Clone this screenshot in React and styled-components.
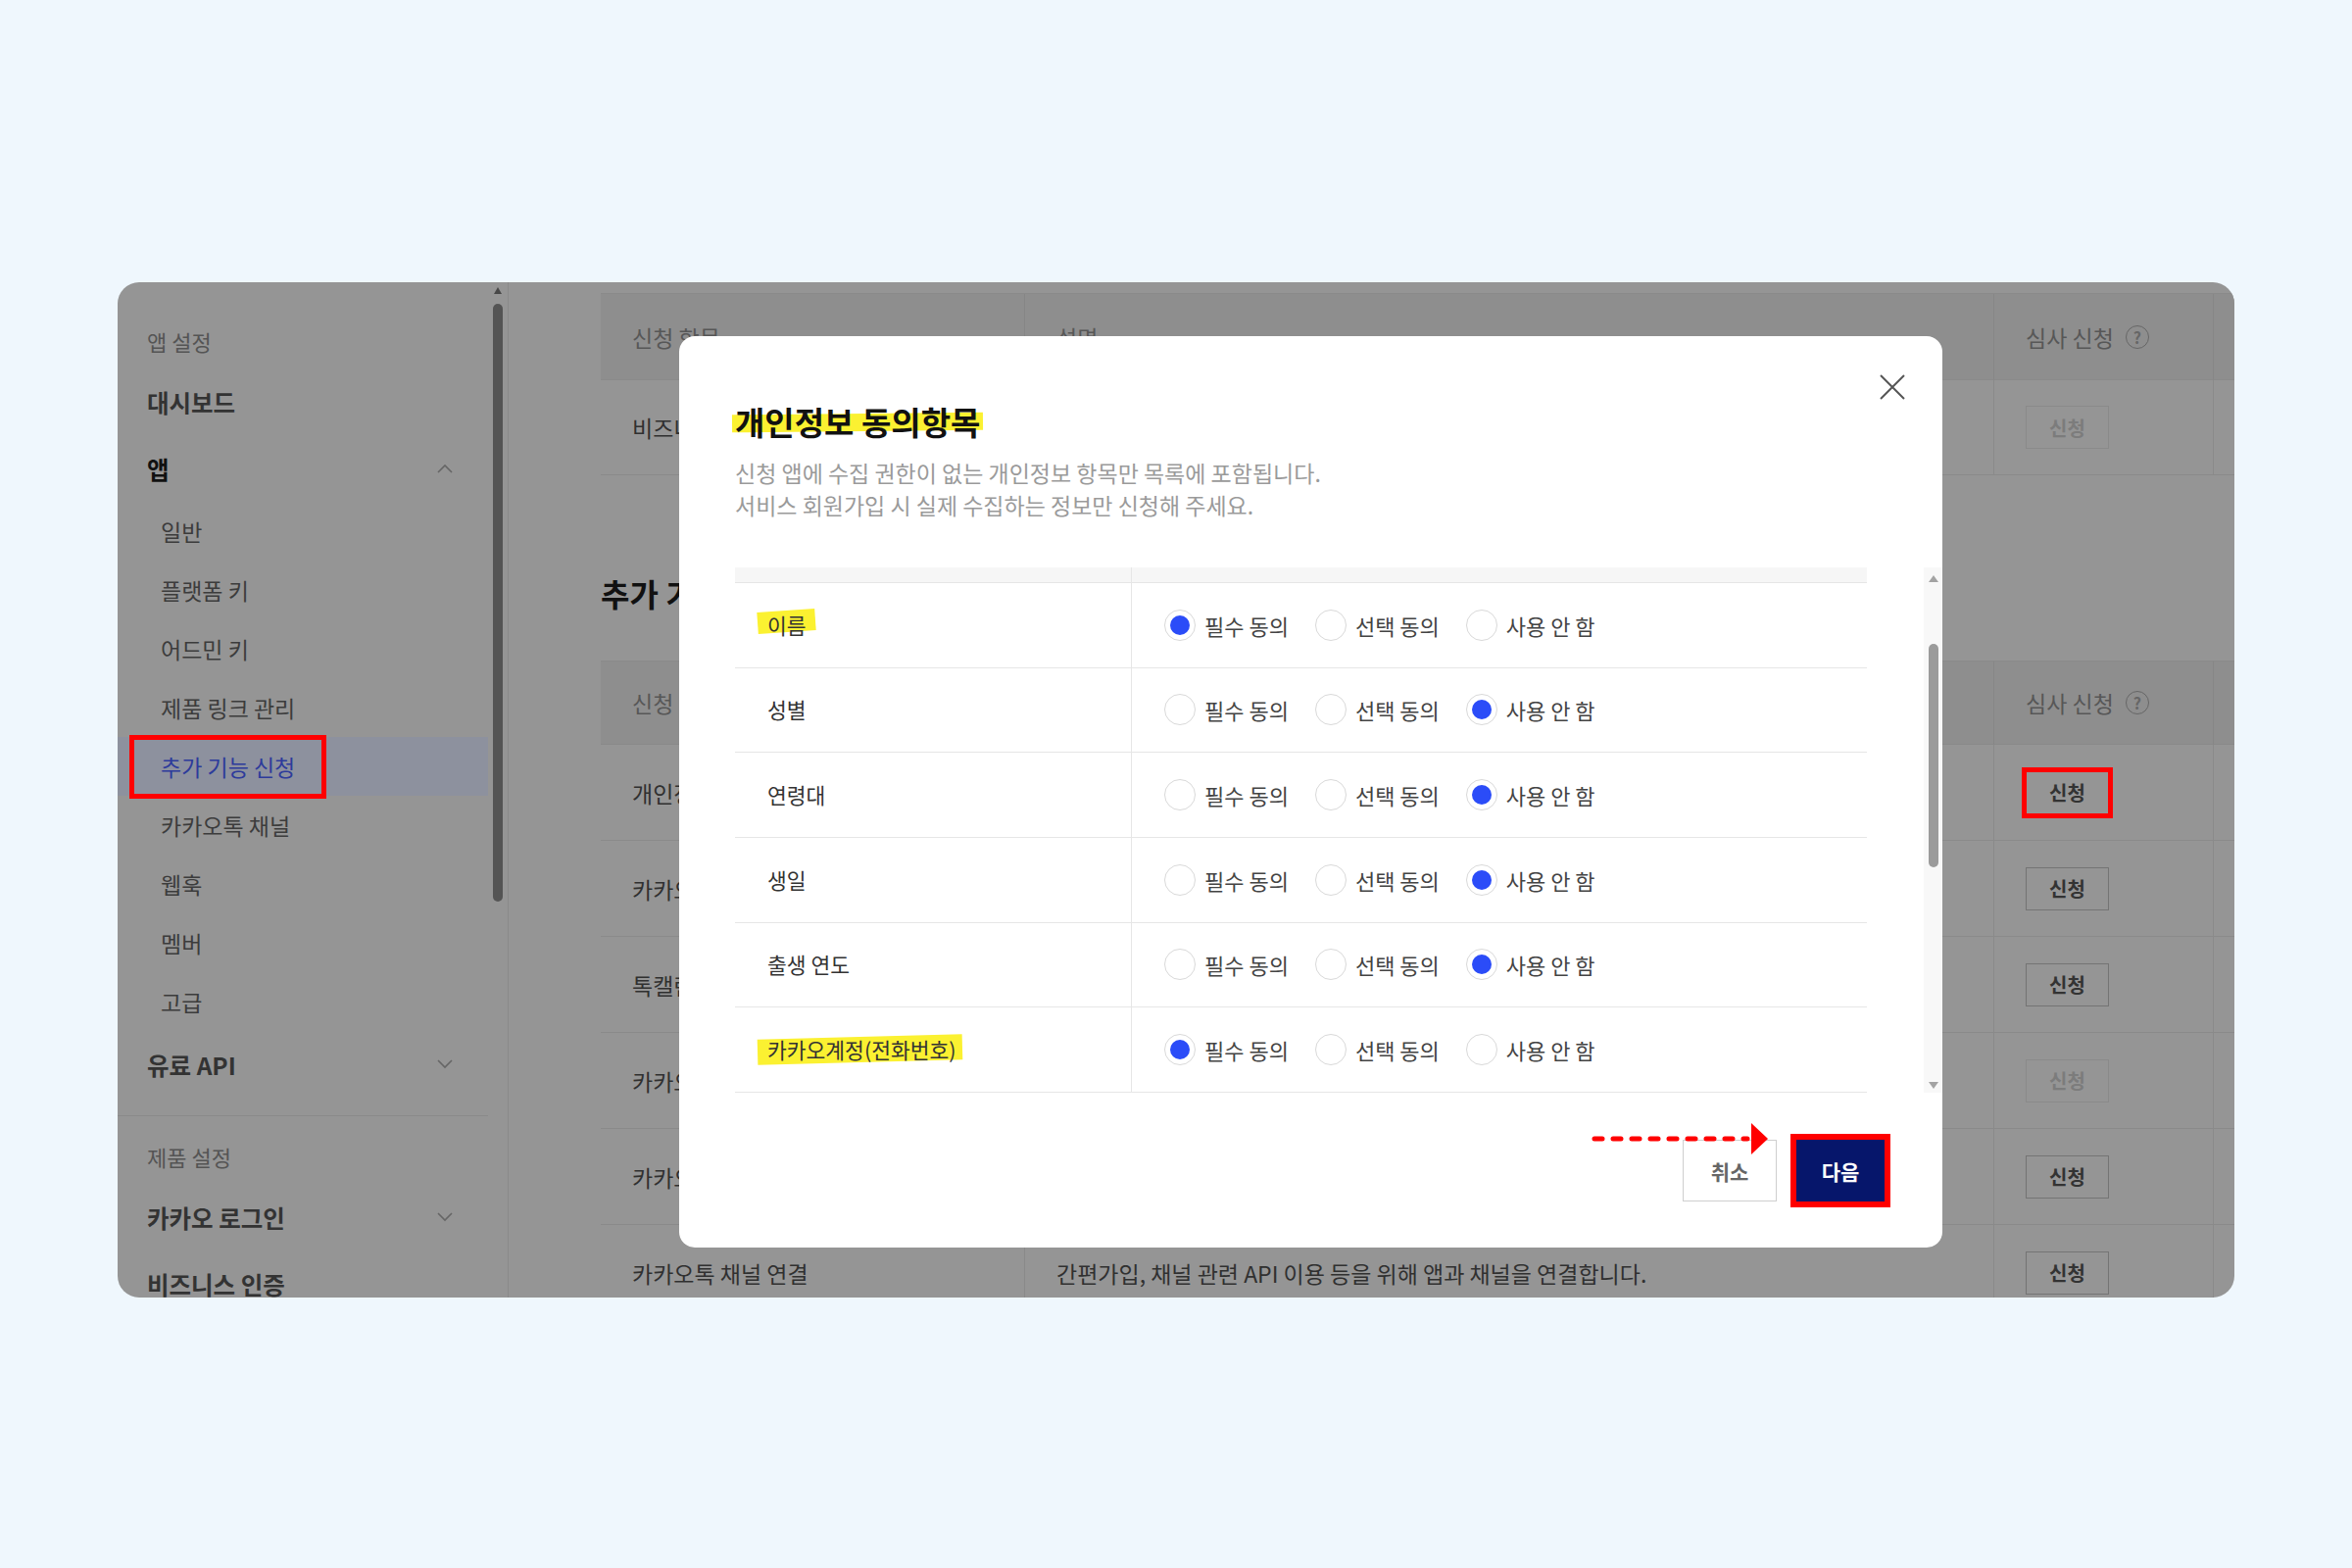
import React from 'react';
import styled, { createGlobalStyle, css } from 'styled-components';

const GlobalStyle = createGlobalStyle`
  * { box-sizing: border-box; }
  html, body { margin: 0; padding: 0; background: #eff7fd; }
  body { font-family: 'Noto Sans CJK KR', 'Noto Sans', sans-serif; }
`;

const Page = styled.div`
  width: 2400px;
  height: 1600px;
  padding: 288px 120px 0;
`;

const Card = styled.div`
  position: relative;
  display: flex;
  width: 2160px;
  height: 1036px;
  border-radius: 22px;
  overflow: hidden;
  background: #959595;
`;

/* ---------- sidebar ---------- */

const Sidebar = styled.aside`
  display: flex;
  flex: 0 0 399px;
  border-right: 1px solid #8a8a8a;
`;

const Nav = styled.nav`
  flex: 0 0 378px;
  padding-top: 40px;
`;

const SectionLabel = styled.div`
  height: 40px;
  line-height: 40px;
  padding-left: 30px;
  margin-bottom: 8px;
  font-size: 22px;
  color: #545454;
  ${(p) => p.$spaced && css`margin-top: 21px;`}
`;

const TopItem = styled.div`
  display: flex;
  align-items: center;
  justify-content: space-between;
  height: 68px;
  padding: 0 36px 0 30px;
  font-size: 24.5px;
  font-weight: 700;
  color: ${(p) => (p.$open ? '#111' : '#333')};
`;

const SubItem = styled.div`
  display: flex;
  align-items: center;
  height: 60px;
  padding-left: 44px;
  font-size: 23px;
  color: #3c3c3c;
  ${(p) =>
    p.$active &&
    css`
      background: #8d919e;
      color: #2d3b9b;
    `}
`;

const Boxed = styled.span`
  display: inline-flex;
  align-items: center;
  height: 55px;
  margin-left: -27px;
  padding: 0 27px;
  outline: 5px solid #ff0000;
`;

const NavDivider = styled.div`
  height: 1px;
  margin-top: 18px;
  background: #8a8a8a;
`;

const ScrollStrip = styled.div`
  display: flex;
  flex: 0 0 20px;
  flex-direction: column;
  align-items: center;
  padding-top: 5px;
`;

const StripArrow = styled.span`
  width: 0;
  height: 0;
  border-left: 4px solid transparent;
  border-right: 4px solid transparent;
  border-bottom: 7px solid #484848;
`;

const StripThumb = styled.span`
  width: 10px;
  height: 610px;
  margin-top: 10px;
  border-radius: 5px;
  background: #545454;
`;

const Chevron = ({ up }) => (
  <svg width="16" height="10" viewBox="0 0 16 10" fill="none">
    <path
      d={up ? 'M1 9 L8 2 L15 9' : 'M1 1 L8 8 L15 1'}
      stroke="#666"
      strokeWidth="1.6"
    />
  </svg>
);

/* ---------- main tables behind the dialog ---------- */

const Main = styled.main`
  flex: 1;
  min-width: 0;
  overflow: hidden;
  padding: 11px 0 0 94px;
`;

const Table = styled.div`
  display: grid;
  grid-template-columns: 432px 989px 224px 220px;
  width: max-content;
  border-top: 1px solid #8a8a8a;
`;

const HeadCell = styled.div`
  display: flex;
  align-items: center;
  height: ${(p) => p.$h}px;
  padding-left: 32px;
  background: #8e8e8e;
  border-bottom: 1px solid #8a8a8a;
  border-left: ${(p) => (p.$first ? 'none' : '1px solid #868686')};
  font-size: 23px;
  color: #575757;
`;

const BodyCell = styled.div`
  display: flex;
  align-items: center;
  height: ${(p) => p.$h}px;
  padding-left: 32px;
  border-bottom: 1px solid #8a8a8a;
  border-left: ${(p) => (p.$first ? 'none' : '1px solid #8a8a8a')};
  font-size: 23px;
  color: #303030;
  white-space: nowrap;
`;

const SectionTitle = styled.h2`
  margin: 98px 0 47px;
  height: 44px;
  line-height: 44px;
  font-size: 32px;
  font-weight: 700;
  color: #111;
`;

const ApplyButton = styled.span`
  display: inline-flex;
  align-items: center;
  justify-content: center;
  width: 85px;
  height: 44px;
  border: 1.5px solid ${(p) => (p.$disabled ? '#8a8a8a' : '#747474')};
  font-size: 20px;
  font-weight: 700;
  color: ${(p) => (p.$disabled ? '#7c7c7c' : '#333')};
  ${(p) =>
    p.$marked &&
    css`
      outline: 5px solid #ff0000;
      outline-offset: -1px;
    `}
`;

const HelpIcon = styled.span`
  display: inline-flex;
  align-items: center;
  justify-content: center;
  width: 24px;
  height: 24px;
  margin-left: 12px;
  border: 1.5px solid #666;
  border-radius: 50%;
  font-size: 16px;
  font-weight: 700;
  color: #666;
`;

/* ---------- dialog ---------- */

const Modal = styled.div`
  position: absolute;
  left: 573px;
  top: 55px;
  display: flex;
  flex-direction: column;
  width: 1289px;
  height: 930px;
  padding: 67px 0 0 57px;
  border-radius: 16px;
  background: #fff;
`;

const CloseButton = styled.span`
  position: absolute;
  top: 38px;
  right: 37px;
  width: 28px;
  height: 28px;
`;

const Title = styled.h1`
  margin: 0;
  line-height: 40px;
  font-size: 33px;
  font-weight: 700;
  color: #111;
`;

const Mark = styled.span`
  position: relative;
  z-index: 0;
  display: inline-block;
  &::before {
    content: '';
    position: absolute;
    z-index: -1;
    top: ${(p) => p.$t}px;
    bottom: ${(p) => p.$b}px;
    left: ${(p) => p.$l}px;
    right: ${(p) => p.$r}px;
    background: #fbf131;
    transform: rotate(${(p) => p.$rot}deg);
  }
`;

const Desc = styled.p`
  margin: 16px 0 0;
  line-height: 33px;
  font-size: 23px;
  color: #9a9a9a;
`;

const ListArea = styled.div`
  display: flex;
  height: 536px;
  margin-top: 47px;
`;

const ConsentGrid = styled.div`
  display: grid;
  grid-template-columns: 405px 750px;
  grid-template-rows: 16px repeat(6, 1fr);
  width: 1155px;
`;

const StripCell = styled.div`
  background: #f6f6f6;
  border-bottom: 1px solid #e6e6e6;
  border-right: ${(p) => (p.$first ? '1px solid #e6e6e6' : 'none')};
`;

const LabelCell = styled.div`
  display: flex;
  align-items: center;
  padding-left: 33px;
  border-bottom: 1px solid #e6e6e6;
  border-right: 1px solid #e6e6e6;
  line-height: 30px;
  font-size: 21.5px;
  color: #333;
`;

const OptionCell = styled.div`
  display: flex;
  align-items: center;
  gap: 27px;
  padding-left: 33px;
  border-bottom: 1px solid #e6e6e6;
`;

const Option = styled.label`
  display: flex;
  align-items: center;
  gap: 9px;
  font-size: 22px;
  color: #444;
`;

const Radio = styled.span`
  display: flex;
  align-items: center;
  justify-content: center;
  width: 32px;
  height: 32px;
  border: 1.5px solid #d9d9d9;
  border-radius: 50%;
  &::after {
    content: '';
    width: 20px;
    height: 20px;
    border-radius: 50%;
    background: ${(p) => (p.$checked ? '#2b4cf8' : 'transparent')};
  }
`;

const ListScroll = styled.div`
  display: flex;
  flex-direction: column;
  align-items: center;
  width: 19px;
  margin-left: auto;
  padding: 8px 0 4px;
  background: #f8f8f8;
`;

const ScrollArrow = styled.span`
  width: 0;
  height: 0;
  border-left: 5px solid transparent;
  border-right: 5px solid transparent;
  ${(p) =>
    p.$down
      ? css`
          margin-top: auto;
          border-top: 7px solid #a3a3a3;
        `
      : css`border-bottom: 7px solid #a3a3a3;`}
`;

const ScrollThumb = styled.span`
  width: 10px;
  height: 228px;
  margin-top: 63px;
  border-radius: 5px;
  background: #9b9b9b;
`;

const Footer = styled.div`
  display: flex;
  justify-content: flex-end;
  gap: 20px;
  margin-top: 48px;
  padding-right: 59px;
`;

const FooterButton = styled.button`
  height: 63px;
  padding: 0;
  font-family: inherit;
  font-size: 21px;
  font-weight: 700;
  ${(p) =>
    p.$primary
      ? css`
          width: 90px;
          border: none;
          background: #06166b;
          color: #fff;
          outline: 6px solid #ff0000;
        `
      : css`
          width: 96px;
          border: 1px solid #cfcfcf;
          background: #fff;
          color: #666;
        `}
`;

const Pointer = styled.svg`
  position: absolute;
  left: 930px;
  top: 803px;
`;

const options = ['필수 동의', '선택 동의', '사용 안 함'];

const consentRows = [
  { label: '이름', checked: 0, mark: { t: 0, b: 8, l: -10, r: -9, rot: -4 } },
  { label: '성별', checked: 2 },
  { label: '연령대', checked: 2 },
  { label: '생일', checked: 2 },
  { label: '출생 연도', checked: 2 },
  {
    label: '카카오계정(전화번호)',
    checked: 0,
    mark: { t: 2, b: 2, l: -10, r: -6, rot: -1.5 },
  },
];

// rows of the table behind the dialog; only the last description is visible
const extraRows = [
  { name: '개인정보', marked: true },
  { name: '카카오톡 메시지' },
  { name: '톡캘린더' },
  { name: '카카오톡 소셜', disabled: true },
  { name: '카카오페이' },
  { name: '카카오톡 채널 연결', desc: '간편가입, 채널 관련 API 이용 등을 위해 앱과 채널을 연결합니다.' },
];

const subMenu = [
  '일반',
  '플랫폼 키',
  '어드민 키',
  '제품 링크 관리',
  '추가 기능 신청',
  '카카오톡 채널',
  '웹훅',
  '멤버',
  '고급',
];

const TableHead = ({ h }) => (
  <>
    <HeadCell $h={h} $first>
      신청 항목
    </HeadCell>
    <HeadCell $h={h}>설명</HeadCell>
    <HeadCell $h={h}>
      심사 신청
      <HelpIcon>?</HelpIcon>
    </HeadCell>
    <HeadCell $h={h} />
  </>
);

const TableRow = ({ row, h }) => (
  <>
    <BodyCell $h={h} $first>
      {row.name}
    </BodyCell>
    <BodyCell $h={h}>{row.desc}</BodyCell>
    <BodyCell $h={h}>
      <ApplyButton $disabled={row.disabled} $marked={row.marked}>
        신청
      </ApplyButton>
    </BodyCell>
    <BodyCell $h={h} />
  </>
);

export default function App() {
  return (
    <Page>
      <GlobalStyle />
      <Card>
        <Sidebar>
          <Nav>
            <SectionLabel>앱 설정</SectionLabel>
            <TopItem>대시보드</TopItem>
            <TopItem $open>
              앱
              <Chevron up />
            </TopItem>
            {subMenu.map((item) =>
              item === '추가 기능 신청' ? (
                <SubItem key={item} $active>
                  <Boxed>{item}</Boxed>
                </SubItem>
              ) : (
                <SubItem key={item}>{item}</SubItem>
              ),
            )}
            <TopItem>
              유료 API
              <Chevron />
            </TopItem>
            <NavDivider />
            <SectionLabel $spaced>제품 설정</SectionLabel>
            <TopItem>
              카카오 로그인
              <Chevron />
            </TopItem>
            <TopItem>비즈니스 인증</TopItem>
          </Nav>
          <ScrollStrip>
            <StripArrow />
            <StripThumb />
          </ScrollStrip>
        </Sidebar>

        <Main>
          <Table>
            <TableHead h={88} />
            <TableRow h={97} row={{ name: '비즈니스 정보', disabled: true }} />
          </Table>
          <SectionTitle>추가 기능</SectionTitle>
          <Table>
            <TableHead h={85} />
            {extraRows.map((row) => (
              <TableRow key={row.name} row={row} h={98} />
            ))}
          </Table>
        </Main>

        <Modal>
          <CloseButton>
            <svg width="28" height="28" viewBox="0 0 28 28">
              <path d="M2 2 L26 26 M26 2 L2 26" stroke="#555" strokeWidth="2" />
            </svg>
          </CloseButton>
          <Title>
            <Mark $t={12} $b={10} $l={-3} $r={-3} $rot={-0.6}>
              개인정보 동의항목
            </Mark>
          </Title>
          <Desc>
            신청 앱에 수집 권한이 없는 개인정보 항목만 목록에 포함됩니다.
            <br />
            서비스 회원가입 시 실제 수집하는 정보만 신청해 주세요.
          </Desc>

          <ListArea>
            <ConsentGrid>
              <StripCell $first />
              <StripCell />
              {consentRows.map((row) => (
                <React.Fragment key={row.label}>
                  <LabelCell>
                    {row.mark ? (
                      <Mark
                        $t={row.mark.t}
                        $b={row.mark.b}
                        $l={row.mark.l}
                        $r={row.mark.r}
                        $rot={row.mark.rot}
                      >
                        {row.label}
                      </Mark>
                    ) : (
                      row.label
                    )}
                  </LabelCell>
                  <OptionCell>
                    {options.map((opt, i) => (
                      <Option key={opt}>
                        <Radio $checked={row.checked === i} />
                        {opt}
                      </Option>
                    ))}
                  </OptionCell>
                </React.Fragment>
              ))}
            </ConsentGrid>
            <ListScroll>
              <ScrollArrow />
              <ScrollThumb />
              <ScrollArrow $down />
            </ListScroll>
          </ListArea>

          <Footer>
            <FooterButton>취소</FooterButton>
            <FooterButton $primary>다음</FooterButton>
          </Footer>

          <Pointer width="181" height="32" viewBox="0 0 181 32">
            <line
              x1="4"
              y1="16"
              x2="160"
              y2="16"
              stroke="#ff0000"
              strokeWidth="5"
              strokeLinecap="round"
              strokeDasharray="8 11"
            />
            <polygon points="164,0 181,16 164,32" fill="#ff0000" />
          </Pointer>
        </Modal>
      </Card>
    </Page>
  );
}
